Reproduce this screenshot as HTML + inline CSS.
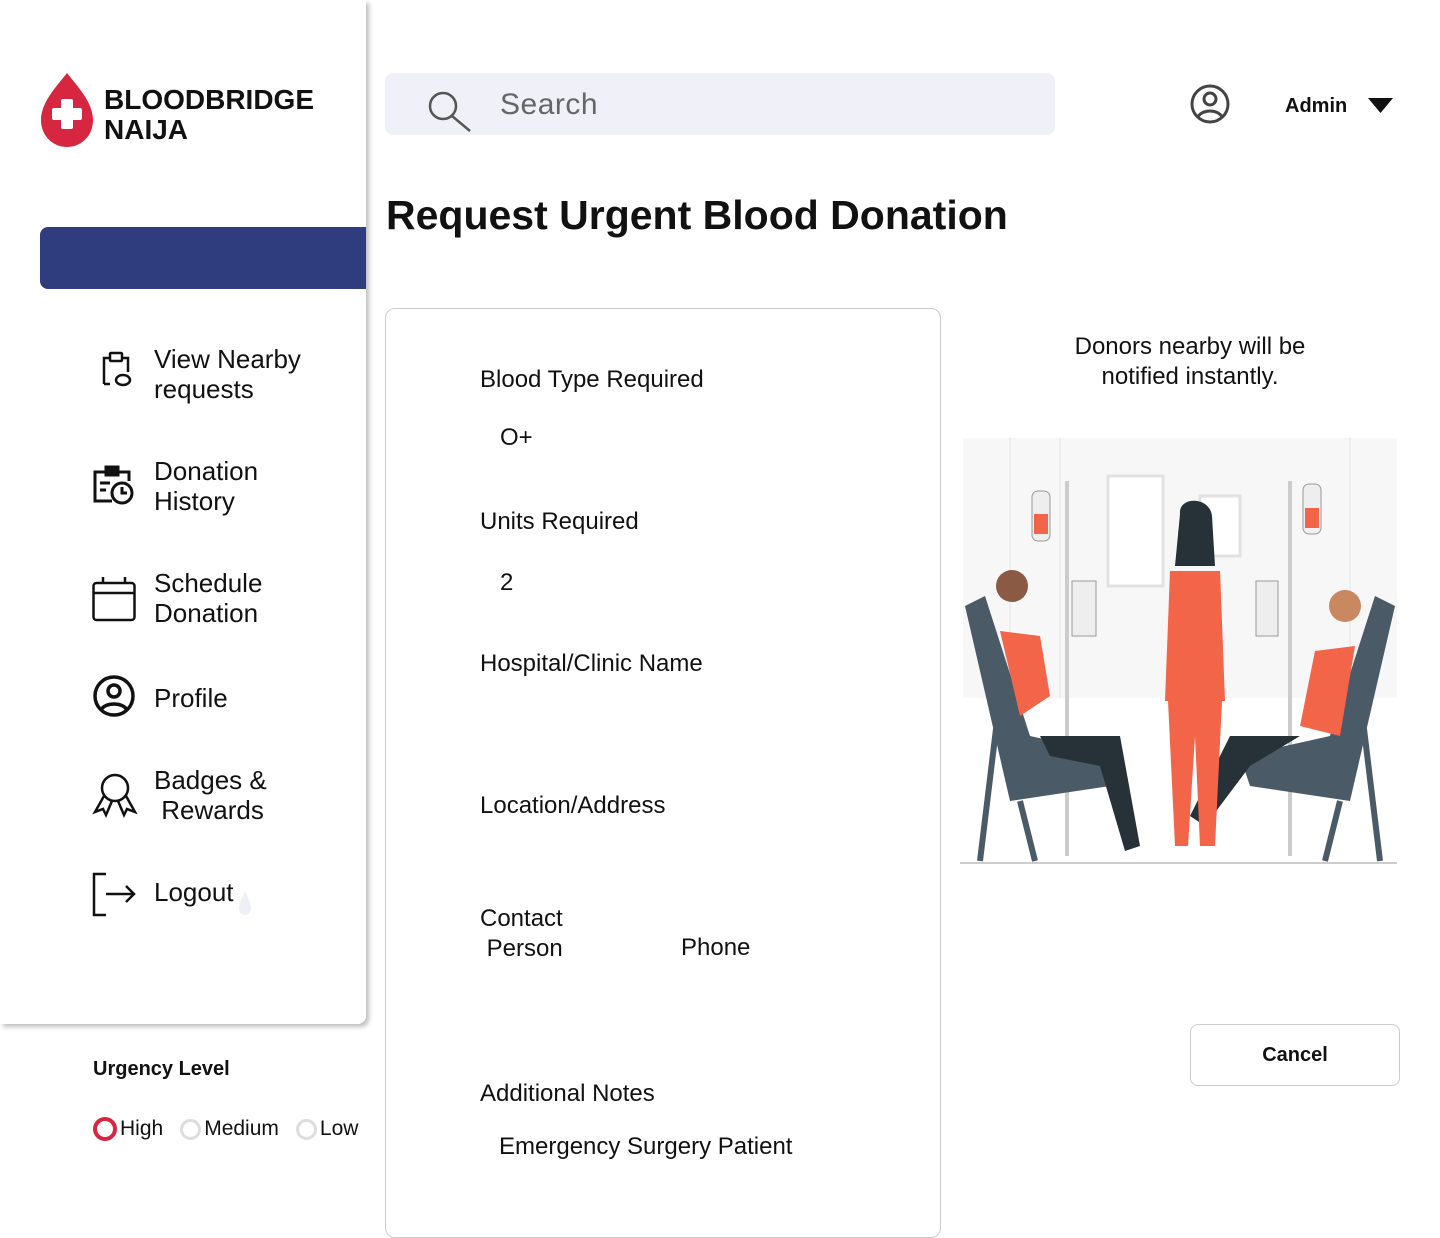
<!DOCTYPE html>
<html><head><meta charset="utf-8"><style>
*{margin:0;padding:0;box-sizing:border-box}
body{width:1440px;height:1219px;background:#fff;font-family:"Liberation Sans",sans-serif;color:#111;position:relative;overflow:hidden}
.abs{position:absolute}
.side{left:0;top:0;width:366px;height:1024px;background:#fff;border-radius:0 0 8px 0;box-shadow:3px 3px 5px rgba(0,0,0,.25)}
.nav{font-size:26px;line-height:30px;color:#111}
.lbl{font-size:24px;color:#111}
</style></head><body>
<div class="abs side"></div>
<svg class="abs" style="left:40px;top:72px" width="54" height="76" viewBox="0 0 54 76"><path d="M27 1 C17 14 1 30 1 48 C1 64 13 75 27 75 C41 75 53 64 53 48 C53 30 37 14 27 1Z" fill="#d72640"/><rect x="12" y="36" width="30" height="12" rx="2" fill="#fff"/><rect x="21" y="27" width="12" height="30" rx="2" fill="#fff"/></svg>
<div class="abs" style="left:104px;top:85px;font-size:28px;font-weight:bold;line-height:30px">BLOODBRIDGE<br>NAIJA</div>
<div class="abs" style="left:40px;top:227px;width:326px;height:62px;background:#2f3c7e;border-radius:8px 0 0 8px"></div>

<svg class="abs" style="left:96px;top:350px" width="40" height="40" viewBox="0 0 40 40" fill="none" stroke="#111" stroke-width="2.5"><path d="M8 34 V8 H14 M26 8 H32 V22"/><rect x="14" y="3" width="12" height="8" rx="1"/><path d="M8 34 H14"/><ellipse cx="27" cy="30" rx="7" ry="5"/></svg>
<div class="abs nav" style="left:154px;top:344px">View Nearby<br>requests</div>
<svg class="abs" style="left:92px;top:463px" width="44" height="44" viewBox="0 0 44 44" fill="none" stroke="#111" stroke-width="3"><path d="M20 38 H3 V9 H37 V18"/><rect x="14" y="4" width="12" height="8" fill="#111"/><path d="M8 20 H18 M8 27 H14"/><circle cx="30" cy="30" r="10"/><path d="M30 24 V30 H35"/></svg>
<div class="abs nav" style="left:154px;top:456px">Donation<br>History</div>
<svg class="abs" style="left:92px;top:576px" width="44" height="46" viewBox="0 0 44 46" fill="none" stroke="#111" stroke-width="2.5"><rect x="1.5" y="7" width="41" height="37" rx="3"/><path d="M1.5 17 H42.5 M11 1 V7 M33 1 V7"/></svg>
<div class="abs nav" style="left:154px;top:568px">Schedule<br>Donation</div>
<svg class="abs" style="left:92px;top:674px" width="44" height="44" viewBox="0 0 44 44" fill="none" stroke="#111" stroke-width="3.5"><circle cx="22" cy="22" r="19"/><circle cx="22" cy="17" r="6"/><path d="M9 36 C13 28 31 28 35 36"/></svg>
<div class="abs nav" style="left:154px;top:683px">Profile</div>
<svg class="abs" style="left:92px;top:772px" width="46" height="46" viewBox="0 0 46 46" fill="none" stroke="#111" stroke-width="2.5"><circle cx="23" cy="16" r="13"/><path d="M12 24 L3 40 L11 37 L14 43 L20 29 M34 24 L43 40 L35 37 L32 43 L26 29"/></svg>
<div class="abs nav" style="left:154px;top:765px">Badges &amp;<br>&nbsp;Rewards</div>
<svg class="abs" style="left:92px;top:872px" width="46" height="46" viewBox="0 0 46 46" fill="none" stroke="#111" stroke-width="2.5"><path d="M14 2 H2 V43 H14 M14 22 H42 M34 14 L42 22 L34 30"/></svg>
<div class="abs nav" style="left:154px;top:877px">Logout</div>
<svg class="abs" style="left:238px;top:890px" width="14" height="26"><path d="M7 1 C4 8 1 13 1 18 C1 22 4 25 7 25 C10 25 13 22 13 18 C13 13 10 8 7 1Z" fill="#eef0f5"/></svg>

<div class="abs" style="left:93px;top:1058px;font-size:20px;font-weight:bold">Urgency Level</div>
<div class="abs" style="left:93px;top:1117px;font-size:21px;display:flex;align-items:center;gap:3px">
<span style="width:24px;height:24px;border:4px solid #d72640;border-radius:50%"></span><span>High</span>
<span style="width:21px;height:21px;border:3px solid #ddd;border-radius:50%;margin-left:14px"></span><span>Medium</span>
<span style="width:21px;height:21px;border:3px solid #ddd;border-radius:50%;margin-left:14px"></span><span>Low</span></div>

<div class="abs" style="left:385px;top:73px;width:670px;height:62px;background:#eff0f8;border-radius:8px"></div>
<svg class="abs" style="left:426px;top:90px" width="46" height="42" viewBox="0 0 46 42" fill="none" stroke="#555" stroke-width="2.5"><circle cx="17" cy="16" r="13"/><path d="M26 26 L44 41"/></svg>
<div class="abs" style="left:500px;top:88px;font-size:30px;color:#666;letter-spacing:.5px">Search</div>
<svg class="abs" style="left:1189px;top:83px" width="42" height="42" viewBox="0 0 42 42" fill="none" stroke="#444" stroke-width="3"><circle cx="21" cy="21" r="18"/><circle cx="21" cy="16" r="6"/><path d="M9 34 C13 26 29 26 33 34"/></svg>
<div class="abs" style="left:1285px;top:95px;font-size:20px;font-weight:bold">Admin</div>
<svg class="abs" style="left:1368px;top:98px" width="26" height="16"><path d="M0 0 H25 L12.5 15Z" fill="#111"/></svg>

<div class="abs" style="left:386px;top:192px;font-size:41px;font-weight:bold">Request Urgent Blood Donation</div>

<div class="abs" style="left:385px;top:308px;width:556px;height:930px;border:1px solid #ccc;border-radius:10px"></div>
<div class="abs lbl" style="left:480px;top:366px">Blood Type Required</div>
<div class="abs lbl" style="left:500px;top:424px">O+</div>
<div class="abs lbl" style="left:480px;top:508px">Units Required</div>
<div class="abs lbl" style="left:500px;top:569px">2</div>
<div class="abs lbl" style="left:480px;top:650px">Hospital/Clinic Name</div>
<div class="abs lbl" style="left:480px;top:792px">Location/Address</div>
<div class="abs lbl" style="left:480px;top:904px;line-height:30px">Contact<br>&nbsp;Person</div>
<div class="abs lbl" style="left:681px;top:934px">Phone</div>
<div class="abs lbl" style="left:480px;top:1080px">Additional Notes</div>
<div class="abs lbl" style="left:499px;top:1133px">Emergency Surgery Patient</div>

<div class="abs" style="left:1040px;top:332px;width:300px;text-align:center;font-size:24px;line-height:30px">Donors nearby will be notified instantly.</div>

<svg class="abs" style="left:960px;top:436px" width="440" height="440" viewBox="0 0 440 440">
<rect x="3" y="2" width="434" height="260" fill="#f7f7f7"/>
<path d="M50 2 V262 M100 2 V262 M390 2 V262" stroke="#eee" stroke-width="2"/>
<rect x="148" y="40" width="55" height="110" fill="#fff" stroke="#e2e2e2" stroke-width="3"/>
<rect x="240" y="60" width="40" height="60" fill="#fff" stroke="#e2e2e2" stroke-width="3"/>
<path d="M0 427 H437" stroke="#ccc" stroke-width="2"/>
<path d="M107 45 V420 M330 45 V420" stroke="#ccc" stroke-width="4"/>
<rect x="72" y="55" width="18" height="50" rx="6" fill="#eee" stroke="#999"/><rect x="74" y="78" width="14" height="20" fill="#f26549"/>
<rect x="343" y="48" width="18" height="50" rx="6" fill="#eee" stroke="#999"/><rect x="345" y="72" width="14" height="20" fill="#f26549"/>
<rect x="112" y="145" width="24" height="55" fill="#eee" stroke="#999"/><rect x="296" y="145" width="22" height="55" fill="#eee" stroke="#999"/>
<path d="M5 170 L25 160 L70 300 L160 320 L150 350 L50 365Z" fill="#4b5a67"/>
<path d="M435 170 L415 160 L370 300 L280 320 L290 350 L390 365Z" fill="#4b5a67"/>
<path d="M40 260 L20 425 M60 365 L75 425 M400 260 L420 425 M380 365 L365 425" stroke="#4b5a67" stroke-width="6"/>
<circle cx="52" cy="150" r="16" fill="#8a5a44"/><path d="M40 195 L80 200 L90 260 L60 280Z" fill="#f26549"/>
<path d="M80 300 L160 300 L180 410 L165 415 L140 330 L90 320Z" fill="#263238"/>
<circle cx="385" cy="170" r="16" fill="#c98860"/><path d="M395 210 L355 215 L340 290 L380 300Z" fill="#f26549"/>
<path d="M340 300 L270 300 L230 380 L245 390 L290 330Z" fill="#263238"/>
<circle cx="235" cy="98" r="17" fill="#c98860"/><path d="M220 78 C218 60 250 60 252 80 L255 130 L215 130Z" fill="#263238"/>
<path d="M210 135 L260 135 L265 265 L205 265Z" fill="#f26549"/>
<path d="M208 265 L262 265 L255 410 L240 410 L235 300 L228 410 L215 410Z" fill="#f26549"/>
</svg>

<div class="abs" style="left:1190px;top:1024px;width:210px;height:62px;border:1px solid #ccc;border-radius:8px;text-align:center;line-height:60px;font-size:20px;font-weight:bold">Cancel</div>
</body></html>
